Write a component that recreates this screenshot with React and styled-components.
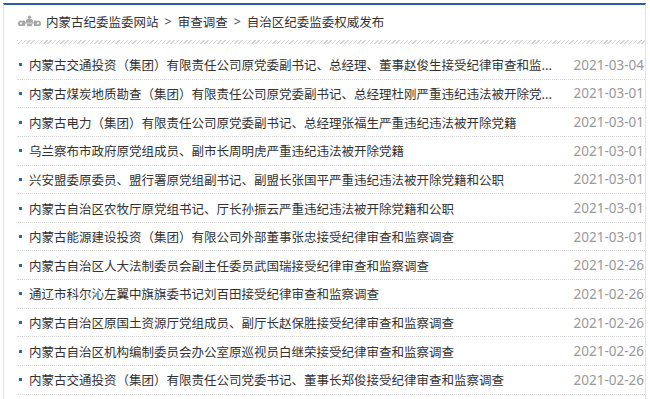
import React from "react";
import styled, { createGlobalStyle } from "styled-components";

const Global = createGlobalStyle`
  html, body { margin: 0; padding: 0; background: #fff; overflow: hidden; }
  body { font-family: "Noto Sans", "Noto Sans CJK SC", sans-serif; }
`;

const Panel = styled.div`
  margin: 3px 0 0 3px;
  width: 643px;
  height: 396px;
  border: 1px solid #e4e4e4;
  border-top: 2px solid #2b5ea9;
  border-bottom: none;
  box-sizing: border-box;
  padding: 0 0 0 13px;
  overflow: hidden;
`;

const Crumbs = styled.div`
  display: flex;
  align-items: center;
  height: 32px;
  font-size: 12.5px;
  color: #333;
  font-family: "Noto Sans CJK SC", sans-serif;
`;

const Logo = styled.svg`
  width: 25px;
  height: 12px;
  margin-right: 4px;
  flex: none;
`;

const Sep = styled.span`
  margin: 0 6px;
  font-family: "Noto Sans", sans-serif;
  color: #444;
`;

const Hatch = styled.div`
  height: 4px;
  margin-top: 3px;
  margin-right: -1px;
  background: repeating-linear-gradient(135deg, #d4d4d4 0 1px, #fff 1px 3px);
`;

const List = styled.ul`
  list-style: none;
  margin: 7px 0 0 0;
  padding: 0;
`;

const Row = styled.li`
  display: flex;
  align-items: center;
  height: 28.65px;
  box-sizing: border-box;
  border-bottom: 1px dotted #d6d6d6;
  padding-right: 1px;
`;

const Bullet = styled.i`
  width: 3px;
  height: 3px;
  background: #2a66b8;
  margin: 0 7px 0 2px;
  flex: none;
`;

const Title = styled.span`
  flex: 1;
  font-size: 12.5px;
  color: #333;
  white-space: nowrap;
  overflow: hidden;
  font-family: "Noto Sans CJK SC", sans-serif;
`;

const DateText = styled.span`
  font-size: 13.5px;
  color: #999;
  font-family: "Noto Sans", sans-serif;
  flex: none;
`;

const items = [
  ["内蒙古交通投资（集团）有限责任公司原党委副书记、总经理、董事赵俊生接受纪律审查和监...", "2021-03-04"],
  ["内蒙古煤炭地质勘查（集团）有限责任公司原党委副书记、总经理杜刚严重违纪违法被开除党...", "2021-03-01"],
  ["内蒙古电力（集团）有限责任公司原党委副书记、总经理张福生严重违纪违法被开除党籍", "2021-03-01"],
  ["乌兰察布市政府原党组成员、副市长周明虎严重违纪违法被开除党籍", "2021-03-01"],
  ["兴安盟委原委员、盟行署原党组副书记、副盟长张国平严重违纪违法被开除党籍和公职", "2021-03-01"],
  ["内蒙古自治区农牧厅原党组书记、厅长孙振云严重违纪违法被开除党籍和公职", "2021-03-01"],
  ["内蒙古能源建设投资（集团）有限公司外部董事张忠接受纪律审查和监察调查", "2021-03-01"],
  ["内蒙古自治区人大法制委员会副主任委员武国瑞接受纪律审查和监察调查", "2021-02-26"],
  ["通辽市科尔沁左翼中旗旗委书记刘百田接受纪律审查和监察调查", "2021-02-26"],
  ["内蒙古自治区原国土资源厅党组成员、副厅长赵保胜接受纪律审查和监察调查", "2021-02-26"],
  ["内蒙古自治区机构编制委员会办公室原巡视员白继荣接受纪律审查和监察调查", "2021-02-26"],
  ["内蒙古交通投资（集团）有限责任公司党委书记、董事长郑俊接受纪律审查和监察调查", "2021-02-26"],
];

function LogoIcon() {
  return (
    <Logo viewBox="0 0 25 12">
      <g fill="#a8a8a8">
        <circle cx="12.5" cy="2.2" r="1.6" />
        <path d="M9 5.5 C9 3.2 16 3.2 16 5.5 L16 7 L9 7 Z" />
        <rect x="8" y="7.2" width="9" height="1.3" />
        <path d="M10 8.8 h5 v2.4 h-5 z" />
        <path d="M1 9 C0.5 6 3.5 4.5 5.5 6 C6.5 4.5 8.5 5.5 8 7.5 L8 11 L2.5 11 C1.5 11 1 10 1 9 Z" />
        <path d="M24 9 C24.5 6 21.5 4.5 19.5 6 C18.5 4.5 16.5 5.5 17 7.5 L17 11 L22.5 11 C23.5 11 24 10 24 9 Z" />
      </g>
      <g fill="#fff">
        <circle cx="4" cy="8.3" r="1.1" />
        <circle cx="21" cy="8.3" r="1.1" />
      </g>
    </Logo>
  );
}

export default function App() {
  return (
    <>
      <Global />
      <Panel>
        <Crumbs>
          <LogoIcon />
          <span>内蒙古纪委监委网站</span>
          <Sep>&gt;</Sep>
          <span>审查调查</span>
          <Sep>&gt;</Sep>
          <span>自治区纪委监委权威发布</span>
        </Crumbs>
        <Hatch />
        <List>
          {items.map(([t, d], i) => (
            <Row key={i}>
              <Bullet />
              <Title>{t}</Title>
              <DateText>{d}</DateText>
            </Row>
          ))}
        </List>
      </Panel>
    </>
  );
}
